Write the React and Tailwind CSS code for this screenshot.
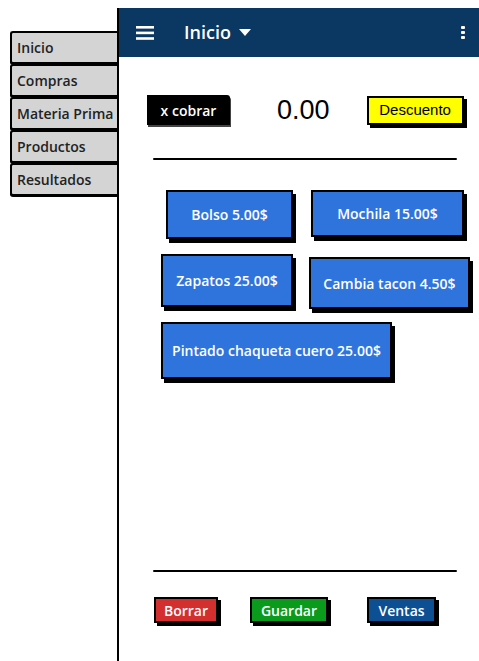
const TABS = ["Inicio", "Compras", "Materia Prima", "Productos", "Resultados"];

const sketch = { fontFamily: "'Open Sans', Lato, sans-serif" };
const plain = { fontFamily: "'Liberation Sans', Arial, sans-serif" };

function Tab({ label }) {
  return (
    <div
      className="h-[33px] bg-[#d4d4d4] border-2 border-black border-r-0 rounded-l-[3px] pl-[5px] flex items-center text-[14px] text-[#222] font-semibold shadow-[0_1px_0_#000]"
      style={sketch}
    >
      {label}
    </div>
  );
}

function ItemButton({ label, className }) {
  return (
    <button
      className={
        "bg-[#2f74dd] border-2 border-black shadow-[3px_4px_0_#000] text-white text-[14px] font-semibold flex items-center justify-center " +
        className
      }
      style={sketch}
    >
      {label}
    </button>
  );
}

function ActionButton({ label, className }) {
  return (
    <button
      className={
        "h-[26px] border-2 border-black shadow-[3px_3px_0_#000] text-white text-[14px] font-semibold flex items-center justify-center " +
        className
      }
      style={sketch}
    >
      {label}
    </button>
  );
}

export default function App() {
  return (
    <div className="w-[479px] h-[661px] bg-white flex overflow-hidden">
      <div className="w-[117px] pt-[31px] pl-[10px] flex flex-col shrink-0">
        {TABS.map((t) => (
          <Tab key={t} label={t} />
        ))}
      </div>

      <div className="flex-1 mt-[8px] border-l-2 border-black flex flex-col">
        <div className="h-[49px] bg-[#0b3862] flex items-center px-[17px] text-white">
          <svg width="18" height="14" viewBox="0 0 18 14">
            <rect x="0" y="0" width="18" height="2.6" fill="#fff" />
            <rect x="0" y="5.6" width="18" height="2.6" fill="#fff" />
            <rect x="0" y="11.2" width="18" height="2.6" fill="#fff" />
          </svg>
          <span className="ml-[30px] text-[18px] font-semibold" style={sketch}>
            Inicio
          </span>
          <svg className="ml-[8px]" width="12" height="7" viewBox="0 0 12 7">
            <path d="M0 0 L12 0 L6 7 Z" fill="#fff" />
          </svg>
          <div className="ml-auto flex flex-col gap-[2px] mr-[-3px]">
            <span className="w-[4px] h-[3px] bg-white rounded-[1px]" />
            <span className="w-[4px] h-[3px] bg-white rounded-[1px]" />
            <span className="w-[4px] h-[3px] bg-white rounded-[1px]" />
          </div>
        </div>

        <div className="flex items-center mt-[38px] pl-[28px]">
          <div
            className="w-[83px] h-[30px] bg-black text-white text-[14px] font-semibold flex items-center justify-center rounded-tr-[3px] shadow-[1px_2px_0_#444]"
            style={sketch}
          >
            x cobrar
          </div>
          <div className="ml-[47px] text-[27px] text-black leading-none" style={plain}>
            0.00
          </div>
          <div
            className="ml-[37px] w-[97px] h-[29px] bg-[#ffff00] border-2 border-black shadow-[3px_3px_0_#000] text-[15px] text-black flex items-center justify-center"
            style={plain}
          >
            Descuento
          </div>
        </div>

        <div className="ml-[34px] w-[304px] h-[2px] bg-black mt-[33px] rounded-full" />

        <div className="flex mt-[30px] pl-[47px]">
          <ItemButton label="Bolso 5.00$" className="w-[127px] h-[49px]" />
          <ItemButton label="Mochila 15.00$" className="ml-[18px] w-[153px] h-[47px]" />
        </div>
        <div className="flex mt-[15px] pl-[42px]">
          <ItemButton label="Zapatos 25.00$" className="w-[132px] h-[53px]" />
          <ItemButton label="Cambia tacon 4.50$" className="ml-[16px] mt-[3px] w-[161px] h-[52px]" />
        </div>
        <div className="flex mt-[13px] pl-[42px]">
          <ItemButton label="Pintado chaqueta cuero 25.00$" className="w-[231px] h-[57px]" />
        </div>

        <div className="ml-[34px] w-[304px] h-[2px] bg-black mt-[191px] rounded-full" />

        <div className="flex mt-[25px] pl-[35px]">
          <ActionButton label="Borrar" className="w-[64px] bg-[#d32f2f]" />
          <ActionButton label="Guardar" className="ml-[32px] w-[78px] bg-[#0a9a1c]" />
          <ActionButton label="Ventas" className="ml-[39px] w-[69px] bg-[#0d4f93]" />
        </div>
      </div>
    </div>
  );
}
